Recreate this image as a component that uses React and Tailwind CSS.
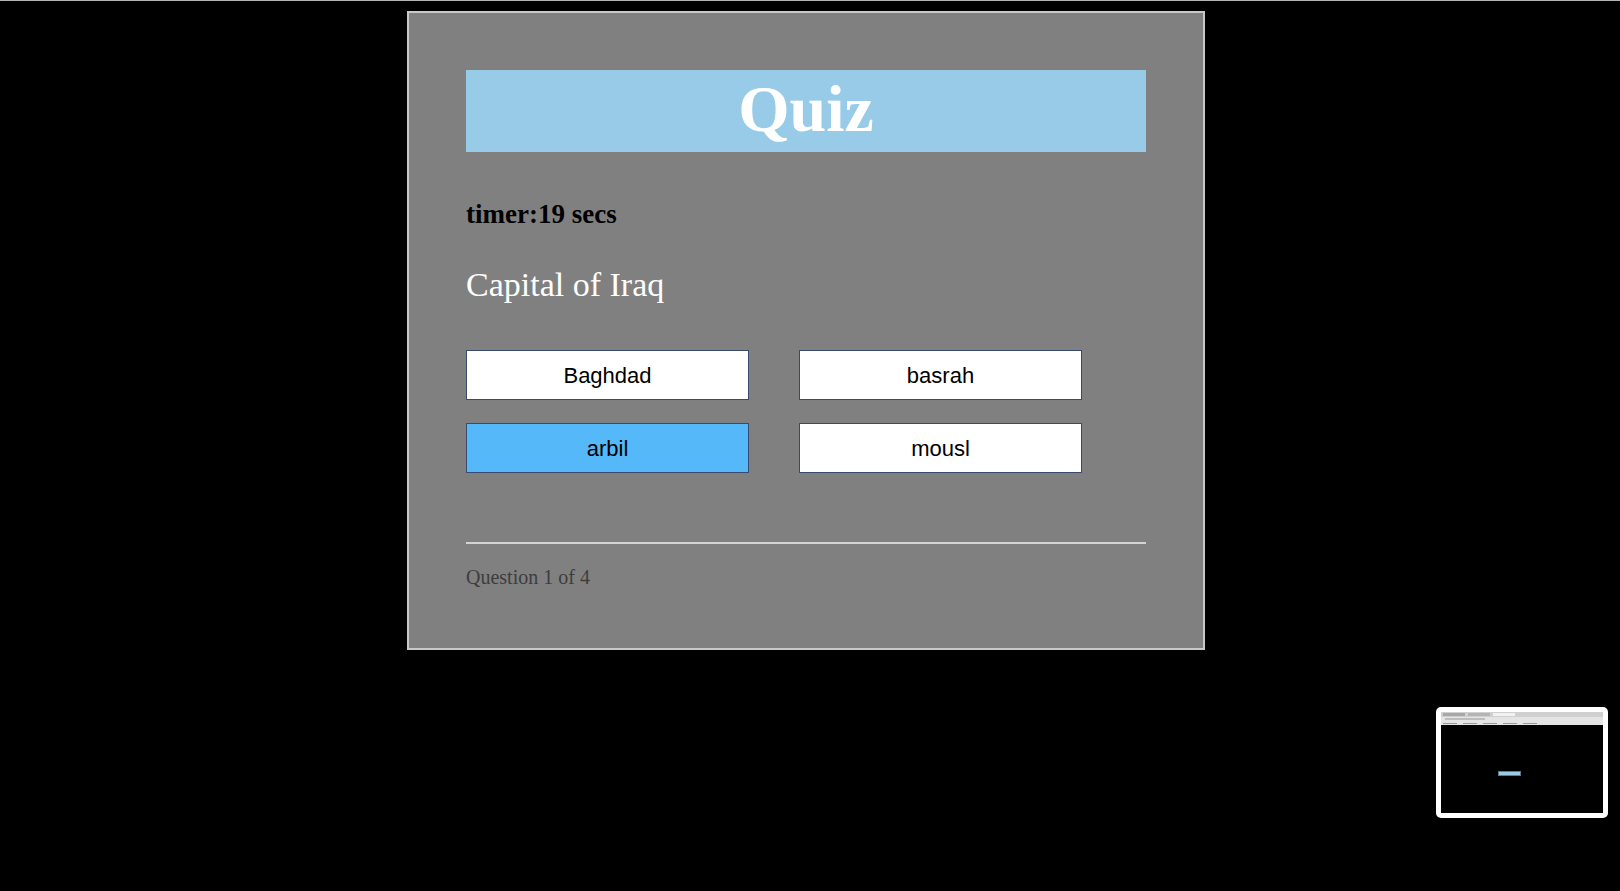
import React, { useState } from 'react';

const answers = ['Baghdad', 'basrah', 'arbil', 'mousl'];

const App = () => {
  const [picked, setPicked] = useState('arbil');

  return (
    <div className="min-h-[891px] w-full bg-black border-t border-[#b5b5b5] relative overflow-hidden">
      {/* Quiz card */}
      <div className="ml-[407px] mt-[10px] w-[798px] bg-[#808080] border-2 border-[#c9c9c9] px-[57px] pt-[57px] pb-[59px] font-['Liberation_Serif',serif]">
        <h1 className="h-[82px] bg-[#97cbe8] text-white text-[66px] font-bold leading-[78px] text-center">
          Quiz
        </h1>

        <div className="mt-[47px] text-[27px] leading-[31px] font-bold text-black">
          timer:19 secs
        </div>

        <div className="mt-[36px] text-[34px] leading-[38px] text-white">
          Capital of Iraq
        </div>

        {/* Answers */}
        <div className="mt-[46px] grid grid-cols-[283px_283px] gap-x-[50px] gap-y-[23px]">
          {answers.map((a) => (
            <button
              key={a}
              onClick={() => setPicked(a)}
              className={`h-[50px] border border-[#3a4a6c] text-[22px] text-black font-['Liberation_Sans',Arial,sans-serif] ${
                picked === a ? 'bg-[#55b8f9]' : 'bg-white'
              }`}
            >
              {a}
            </button>
          ))}
        </div>

        <div className="mt-[69px] h-[2px] bg-[#d4d4d4]" />

        <div className="mt-[21px] text-[20px] leading-[24px] text-[#3d3d3d]">
          Question 1 of 4
        </div>
      </div>

      {/* Screenshot preview thumbnail */}
      <div className="absolute left-[1436px] top-[706px] w-[172px] h-[111px] bg-white rounded-[5px] p-[5px]">
        <div className="w-full h-full bg-black flex flex-col">
          <div className="h-[13px] bg-[#e4e4e4] flex flex-col">
            <div className="h-[5px] bg-[#d0d0d0] flex items-center gap-[3px] px-[2px]">
              <div className="w-[22px] h-[3px] bg-[#a8a8a8]" />
              <div className="w-[22px] h-[3px] bg-[#b4b4b4]" />
              <div className="w-[22px] h-[3px] bg-[#f2f2f2]" />
            </div>
            <div className="h-[4px] flex items-center px-[4px]">
              <div className="w-[40px] h-[2px] bg-[#bdbdbd]" />
            </div>
            <div className="h-[4px] flex items-center gap-[6px] px-[2px]">
              <div className="w-[14px] h-[1px] bg-[#9a9a9a]" />
              <div className="w-[14px] h-[1px] bg-[#9a9a9a]" />
              <div className="w-[14px] h-[1px] bg-[#9a9a9a]" />
              <div className="w-[14px] h-[1px] bg-[#9a9a9a]" />
              <div className="w-[14px] h-[1px] bg-[#9a9a9a]" />
            </div>
          </div>
          <div className="flex-1 pt-[46px] pl-[57px]">
            <div className="w-[23px] h-[5px] bg-[#97cbe8] border border-[#5b7a99]" />
          </div>
        </div>
      </div>
    </div>
  );
};

export default App;
